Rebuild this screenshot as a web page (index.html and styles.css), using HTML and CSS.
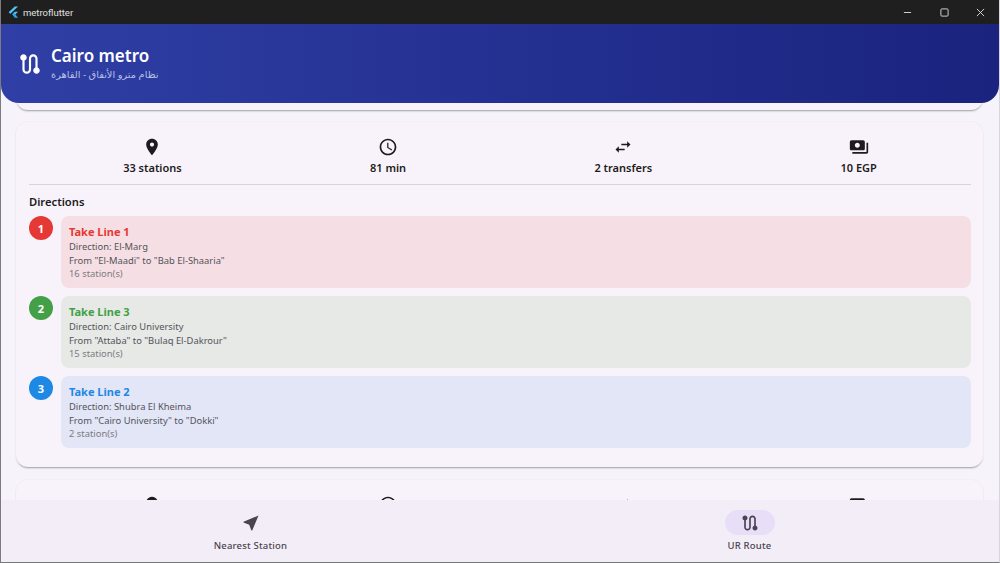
FILE: index.html
```html
<!DOCTYPE html>
<html lang="en">
<head>
    <meta charset="UTF-8">
    <meta name="viewport" content="width=device-width, initial-scale=1.0">
    <title>metroflutter</title>
    <link rel="stylesheet" href="styles.css">
</head>
<body>
    <div class="window">
        <!-- Title bar -->
        <div class="titlebar">
            <svg class="app-logo" viewBox="0 0 14 16" aria-hidden="true">
                <polygon points="8.6,0.5 12.8,0.5 3,9.6 0.8,7.6" fill="#54c5f8"/>
                <polygon points="8.6,7.2 12.8,7.2 7.6,12.2 5.5,10.2" fill="#54c5f8"/>
                <polygon points="5.5,10.2 7.6,8.3 12.8,14.6 8.6,14.6" fill="#29a6e8"/>
            </svg>
            <span class="app-name">metroflutter</span>
            <div class="window-controls">
                <svg viewBox="0 0 10 10" aria-hidden="true"><path d="M1 5h8"/></svg>
                <svg viewBox="0 0 10 10" aria-hidden="true"><rect x="1" y="1" width="8" height="8" rx="1"/></svg>
                <svg viewBox="0 0 10 10" aria-hidden="true"><path d="M1 1l8 8M9 1l-8 8"/></svg>
            </div>
        </div>

        <!-- App header -->
        <header class="app-header">
            <svg class="header-icon" viewBox="0 0 24 24" aria-hidden="true"><path d="M19 15.18V7c0-2.21-1.79-4-4-4s-4 1.79-4 4v10c0 1.1-.9 2-2 2s-2-.9-2-2V8.82C8.16 8.4 9 7.3 9 6c0-1.66-1.34-3-3-3S3 4.34 3 6c0 1.3.84 2.4 2 2.82V17c0 2.21 1.79 4 4 4s4-1.79 4-4V7c0-1.1.9-2 2-2s2 .9 2 2v8.18c-1.16.41-2 1.51-2 2.82 0 1.66 1.34 3 3 3s3-1.34 3-3c0-1.3-.84-2.4-2-2.82z"/></svg>
            <div>
                <h1 class="header-title">Cairo metro</h1>
                <p class="header-sub" dir="rtl" lang="ar">نظام مترو الأنفاق - القاهرة</p>
            </div>
        </header>

        <!-- Route list -->
        <main class="route-list">
            <div class="card card-stub"></div>

            <section class="card">
                <div class="stats">
                    <div class="stat">
                        <svg viewBox="0 0 24 24" aria-hidden="true"><path d="M12 2C8.13 2 5 5.13 5 9c0 5.25 7 13 7 13s7-7.75 7-13c0-3.87-3.13-7-7-7zm0 9.5c-1.38 0-2.5-1.12-2.5-2.5s1.12-2.5 2.5-2.5 2.5 1.12 2.5 2.5-1.12 2.5-2.5 2.5z"/></svg>
                        <span>33 stations</span>
                    </div>
                    <div class="stat">
                        <svg viewBox="0 0 24 24" aria-hidden="true"><path d="M11.99 2C6.47 2 2 6.48 2 12s4.47 10 9.99 10C17.52 22 22 17.52 22 12S17.52 2 11.99 2zM12 20c-4.42 0-8-3.58-8-8s3.58-8 8-8 8 3.58 8 8-3.58 8-8 8zm.5-13H11v6l5.25 3.15.75-1.23-4.5-2.67z"/></svg>
                        <span>81 min</span>
                    </div>
                    <div class="stat">
                        <svg viewBox="0 0 24 24" aria-hidden="true"><path d="M6.99 11L3 15l3.99 4v-3H14v-2H6.99v-3zM21 9l-3.99-4v3H10v2h7.01v3L21 9z"/></svg>
                        <span>2 transfers</span>
                    </div>
                    <div class="stat">
                        <svg viewBox="0 0 24 24" aria-hidden="true"><path d="M19 14V6c0-1.1-.9-2-2-2H3c-1.1 0-2 .9-2 2v8c0 1.1.9 2 2 2h14c1.1 0 2-.9 2-2zm-9-1c-1.66 0-3-1.34-3-3s1.34-3 3-3 3 1.34 3 3-1.34 3-3 3zm13-6v11c0 1.1-.9 2-2 2H4v-2h17V7h2z"/></svg>
                        <span>10 EGP</span>
                    </div>
                </div>

                <h2 class="directions-title">Directions</h2>

                <div class="step step-red">
                    <div class="step-num">1</div>
                    <div class="step-box">
                        <h3>Take Line 1</h3>
                        <p>Direction: El-Marg</p>
                        <p>From "El-Maadi" to "Bab El-Shaaria"</p>
                        <p class="step-count">16 station(s)</p>
                    </div>
                </div>
                <div class="step step-green">
                    <div class="step-num">2</div>
                    <div class="step-box">
                        <h3>Take Line 3</h3>
                        <p>Direction: Cairo University</p>
                        <p>From "Attaba" to "Bulaq El-Dakrour"</p>
                        <p class="step-count">15 station(s)</p>
                    </div>
                </div>
                <div class="step step-blue">
                    <div class="step-num">3</div>
                    <div class="step-box">
                        <h3>Take Line 2</h3>
                        <p>Direction: Shubra El Kheima</p>
                        <p>From "Cairo University" to "Dokki"</p>
                        <p class="step-count">2 station(s)</p>
                    </div>
                </div>
            </section>

            <!-- Next route, cut off by the bottom nav: labels only hold the column widths -->
            <section class="card card-peek">
                <div class="stats">
                    <div class="stat">
                        <svg viewBox="0 0 24 24" aria-hidden="true"><path d="M12 2C8.13 2 5 5.13 5 9c0 5.25 7 13 7 13s7-7.75 7-13c0-3.87-3.13-7-7-7zm0 9.5c-1.38 0-2.5-1.12-2.5-2.5s1.12-2.5 2.5-2.5 2.5 1.12 2.5 2.5-1.12 2.5-2.5 2.5z"/></svg>
                        <span>33 stations</span>
                    </div>
                    <div class="stat">
                        <svg viewBox="0 0 24 24" aria-hidden="true"><path d="M11.99 2C6.47 2 2 6.48 2 12s4.47 10 9.99 10C17.52 22 22 17.52 22 12S17.52 2 11.99 2zM12 20c-4.42 0-8-3.58-8-8s3.58-8 8-8 8 3.58 8 8-3.58 8-8 8zm.5-13H11v6l5.25 3.15.75-1.23-4.5-2.67z"/></svg>
                        <span>81 min</span>
                    </div>
                    <div class="stat">
                        <svg viewBox="0 0 24 24" aria-hidden="true"><path d="M6.99 11L3 15l3.99 4v-3H14v-2H6.99v-3zM21 9l-3.99-4v3H10v2h7.01v3L21 9z"/></svg>
                        <span>2 transfers</span>
                    </div>
                    <div class="stat">
                        <svg viewBox="0 0 24 24" aria-hidden="true"><path d="M19 14V6c0-1.1-.9-2-2-2H3c-1.1 0-2 .9-2 2v8c0 1.1.9 2 2 2h14c1.1 0 2-.9 2-2zm-9-1c-1.66 0-3-1.34-3-3s1.34-3 3-3 3 1.34 3 3-1.34 3-3 3zm13-6v11c0 1.1-.9 2-2 2H4v-2h17V7h2z"/></svg>
                        <span>10 EGP</span>
                    </div>
                </div>
            </section>
        </main>

        <!-- Bottom navigation -->
        <nav class="bottom-nav">
            <div class="nav-item">
                <div class="nav-pill">
                    <svg viewBox="0 0 24 24" aria-hidden="true"><path d="M21 3L3 10.53v.98l6.84 2.65L12.48 21h.98L21 3z"/></svg>
                </div>
                <span>Nearest Station</span>
            </div>
            <div class="nav-item nav-item-active">
                <div class="nav-pill">
                    <svg viewBox="0 0 24 24" aria-hidden="true"><path d="M19 15.18V7c0-2.21-1.79-4-4-4s-4 1.79-4 4v10c0 1.1-.9 2-2 2s-2-.9-2-2V8.82C8.16 8.4 9 7.3 9 6c0-1.66-1.34-3-3-3S3 4.34 3 6c0 1.3.84 2.4 2 2.82V17c0 2.21 1.79 4 4 4s4-1.79 4-4V7c0-1.1.9-2 2-2s2 .9 2 2v8.18c-1.16.41-2 1.51-2 2.82 0 1.66 1.34 3 3 3s3-1.34 3-3c0-1.3-.84-2.4-2-2.82z"/></svg>
                </div>
                <span>UR Route</span>
            </div>
        </nav>
    </div>
</body>
</html>
```

FILE: styles.css
```css
* {
    box-sizing: border-box;
}
html, body {
    height: 100%;
    margin: 0;
    overflow: hidden;
}
body {
    font-family: "Noto Sans", "DejaVu Sans", sans-serif;
    background-color: #f6f4fa;
    color: #1d1b20;
}
h1, h2, h3, p {
    margin: 0;
}
.window {
    display: flex;
    flex-direction: column;
    height: 563px;
    border-left: 1px solid #7b7b80;
    border-right: 1px solid #d8d6dc;
    border-bottom: 1px solid #77777c;
}

/* Title bar */
.titlebar {
    display: flex;
    align-items: center;
    flex: 0 0 24px;
    padding-left: 7px;
    background-color: #1f1f1f;
    color: #e0e0e0;
    font-family: Roboto, sans-serif;
    font-size: 9.5px;
}
.app-logo {
    width: 11px;
    height: 13px;
    margin-right: 4px;
}
.window-controls {
    display: flex;
    align-items: center;
    gap: 27.5px;
    margin-left: auto;
    margin-right: 14px;
}
.window-controls svg {
    width: 9px;
    height: 9px;
    fill: none;
    stroke: #e0e0e0;
    stroke-width: 1;
}

/* App header */
.app-header {
    position: relative;
    z-index: 2;
    display: flex;
    align-items: center;
    gap: 8px;
    flex: 0 0 79px;
    padding: 0 16px;
    border-radius: 0 0 18px 18px;
    background: linear-gradient(90deg, #2f3fa5, #1a237e);
    color: #fff;
}
.header-icon {
    width: 26px;
    height: 26px;
    fill: #fff;
}
.header-title {
    font-size: 17px;
    font-weight: 600;
    line-height: 22px;
}
.header-sub {
    font-size: 9.8px;
    line-height: 15px;
    color: #b9c0e6;
    text-align: right;
}

/* Route list */
.route-list {
    flex: 1;
    min-height: 0;
    margin-top: -20px;
    padding: 0 16px 0 15px;
    overflow: hidden;
}
.card {
    margin-bottom: 13px;
    padding: 15px 12px 16px 13px;
    border-radius: 12px;
    background-color: #f8f3fa;
    box-shadow: 0 2px 2px -1px rgba(0, 0, 0, 0.35), 0 0 2px rgba(0, 0, 0, 0.07);
}
.card-stub {
    height: 27px;
    margin-bottom: 12px;
    padding: 0;
}
.stats {
    display: flex;
    justify-content: space-around;
    height: 48px;
    border-bottom: 1px solid #d6d3da;
}
.stat {
    display: flex;
    flex-direction: column;
    align-items: center;
    gap: 3px;
    font-size: 11px;
    font-weight: 600;
    line-height: 15px;
}
.stat svg {
    width: 20px;
    height: 20px;
    fill: #1d1b20;
}
.card-peek .stat span {
    visibility: hidden;
}
.directions-title {
    margin: 9px 0 6px;
    font-size: 11.2px;
    font-weight: 600;
    line-height: 16px;
}

/* Direction steps */
.step {
    display: flex;
    gap: 8px;
    margin-bottom: 8px;
}
.step:last-child {
    margin-bottom: 3px;
}
.step-num {
    display: flex;
    align-items: center;
    justify-content: center;
    flex: 0 0 24px;
    height: 24px;
    border-radius: 50%;
    color: #fff;
    font-size: 11px;
    font-weight: 700;
}
.step-box {
    flex: 1;
    height: 72px;
    padding: 8px;
    border-radius: 8px;
    font-size: 9.4px;
    line-height: 13.5px;
    color: #55535a;
}
.step-box h3 {
    font-size: 11px;
    font-weight: 700;
    line-height: 16px;
}
.step-count {
    color: #7d7b82;
}
.step-red .step-num { background-color: #e53935; }
.step-red .step-box { background-color: #f6dfe4; }
.step-red h3 { color: #e53935; }
.step-green .step-num { background-color: #43a047; }
.step-green .step-box { background-color: #e6e9e6; }
.step-green h3 { color: #43a047; }
.step-blue .step-num { background-color: #1e88e5; }
.step-blue .step-box { background-color: #e2e6f7; }
.step-blue h3 { color: #1e88e5; }

/* Bottom navigation */
.bottom-nav {
    position: relative;
    z-index: 1;
    display: flex;
    flex: 0 0 62px;
    background-color: #f3edf7;
}
.nav-item {
    display: flex;
    flex-direction: column;
    align-items: center;
    flex: 1;
    padding-top: 10px;
    font-size: 9.5px;
    font-weight: 500;
    letter-spacing: 0.2px;
    line-height: 14px;
    color: #49454f;
}
.nav-pill {
    display: flex;
    align-items: center;
    justify-content: center;
    width: 50px;
    height: 25px;
    margin-bottom: 4px;
    border-radius: 13px;
}
.nav-pill svg {
    width: 20px;
    height: 20px;
    fill: #49454f;
}
.nav-item-active .nav-pill {
    background-color: #e8def8;
}
```
